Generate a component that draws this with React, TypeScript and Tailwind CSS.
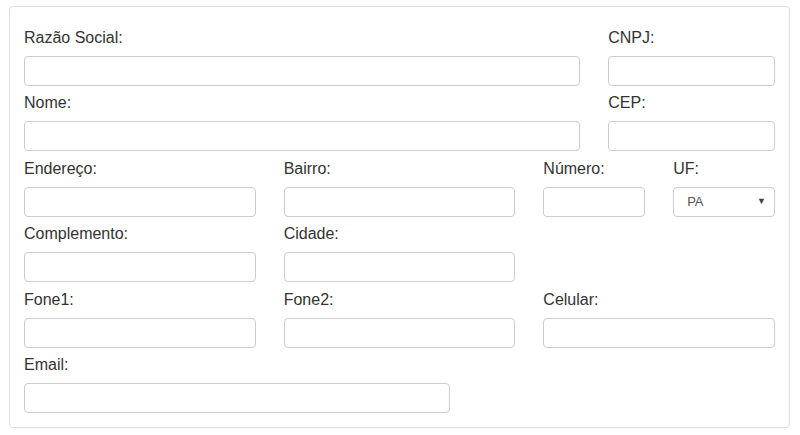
import React from 'react'

type Field = { label: string; span: string; select?: string }

const rows: Field[][] = [
  [
    { label: 'Razão Social:', span: 'col-span-9' },
    { label: 'CNPJ:', span: 'col-span-3' },
  ],
  [
    { label: 'Nome:', span: 'col-span-9' },
    { label: 'CEP:', span: 'col-span-3' },
  ],
  [
    { label: 'Endereço:', span: 'col-span-4' },
    { label: 'Bairro:', span: 'col-span-4' },
    { label: 'Número:', span: 'col-span-2' },
    { label: 'UF:', span: 'col-span-2', select: 'PA' },
  ],
  [
    { label: 'Complemento:', span: 'col-span-4' },
    { label: 'Cidade:', span: 'col-span-4' },
  ],
  [
    { label: 'Fone1:', span: 'col-span-4' },
    { label: 'Fone2:', span: 'col-span-4' },
    { label: 'Celular:', span: 'col-span-4' },
  ],
  [{ label: 'Email:', span: 'col-span-7' }],
]

function FieldBox({ field }: { field: Field }) {
  return (
    <div className={`${field.span} flex flex-col gap-[7px]`}>
      <label className="text-[16px] leading-[23px] text-[#333]">{field.label}</label>
      {field.select ? (
        <div className="h-[30px] rounded-[4px] border border-[#ccc] bg-white flex items-center justify-between pl-[13px] pr-[8px]">
          <span className="text-[13px] text-[#555]">{field.select}</span>
          <span className="text-[9px] text-[#444]">▼</span>
        </div>
      ) : (
        <input className="h-[30px] w-full rounded-[4px] border border-[#ccc] bg-white outline-none" />
      )}
    </div>
  )
}

export default function App() {
  return (
    <div className="w-[800px] h-[435px] bg-white pt-[6px] pl-[9px] font-['Liberation_Sans',Arial,sans-serif]">
      <div className="w-[781px] rounded-[4px] border border-[#ddd] pt-[19px] pb-[14px] pl-[14px] pr-[14px]">
        <div className="flex flex-col gap-y-[5.4px]">
          {rows.map((row, i) => (
            <div key={i} className="grid grid-cols-12 gap-x-[28px]">
              {row.map(f => (
                <FieldBox key={f.label} field={f} />
              ))}
            </div>
          ))}
        </div>
      </div>
    </div>
  )
}
